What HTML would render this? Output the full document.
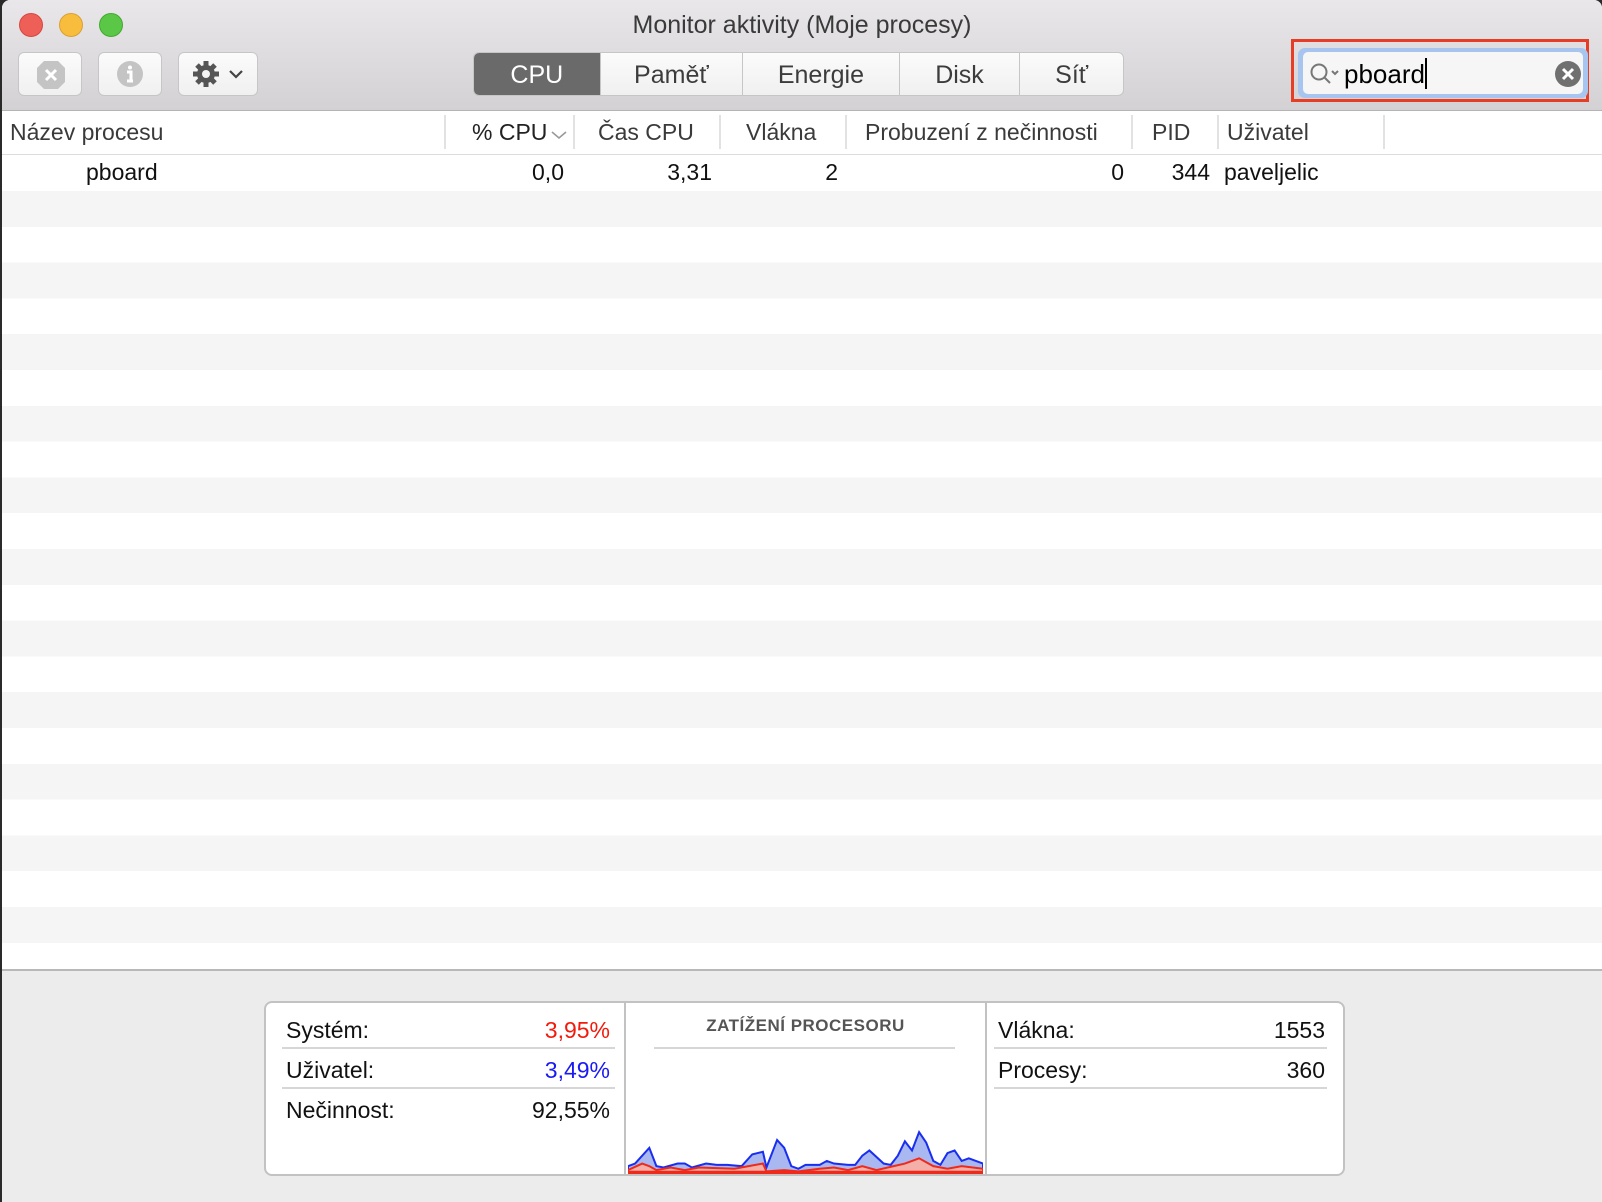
<!DOCTYPE html>
<html><head><meta charset="utf-8"><style>
*{margin:0;padding:0;box-sizing:border-box}
body{width:1602px;height:1202px;overflow:hidden;background:#2a2a2a;font-family:"Liberation Sans",sans-serif;position:relative}
.win{position:absolute;left:2px;top:0;width:1600px;height:1202px;background:#fff;border-radius:8px 8px 0 0;overflow:hidden}
.tb{position:absolute;left:0;top:0;width:100%;height:111px;background:linear-gradient(#e9e7ea,#d3d1d4);border-bottom:1px solid #b4b4b4}
.dot{position:absolute;top:13px;width:24px;height:24px;border-radius:50%}
.title{position:absolute;top:11px;left:0;width:100%;text-align:center;font-size:25px;color:#3a3a3a}
.btn{position:absolute;top:52px;height:44px;background:linear-gradient(#fbfbfb,#f0f0f0);border:1px solid #c6c6c6;border-radius:6px}
.seg{position:absolute;top:52px;left:471px;width:651px;height:44px;border:1px solid #c6c6c6;border-radius:6px;background:linear-gradient(#fbfbfb,#f0f0f0);display:flex;overflow:hidden}
.seg div{height:100%;display:flex;align-items:center;justify-content:center;font-size:25px;color:#3c3c3c;border-right:1px solid #c6c6c6;padding-top:2px}
.seg div.on{background:#6a6a6a;color:#fff}
.hdr{position:absolute;top:111px;left:0;width:100%;height:44px;border-bottom:1px solid #dcdcdc;background:#fff}
.hdr span{position:absolute;top:8px;font-size:23px;color:#3a3a3a}
.hdr i{position:absolute;top:4px;width:2px;height:34px;background:#e2e2e2}
.row{position:absolute;left:0;width:100%;height:36px;font-size:23px;color:#111}
.row span{position:absolute;top:4px}
.bot{position:absolute;left:0;top:969px;width:100%;height:233px;background:#ececec;border-top:2px solid #b8b8b8}
.box{position:absolute;left:262px;top:30px;width:1081px;height:175px;background:#fff;border:2px solid #c2c2c2;border-radius:8px}
.l{position:absolute;font-size:23px;color:#111}
.ln{position:absolute;height:2px;background:#d6d6d6}
</style></head><body>
<div class="win">
<div class="tb">
<div class="dot" style="left:17px;background:#ee5f58;border:1px solid #d8463f"></div>
<div class="dot" style="left:57px;background:#f8bd3c;border:1px solid #daa033"></div>
<div class="dot" style="left:97px;background:#5ac746;border:1px solid #44a830"></div>
<div class="title">Monitor aktivity (Moje procesy)</div>
<div class="btn" style="left:16px;width:64px"><svg width="64" height="44" viewBox="0 0 64 44"><polygon points="25,8 39,8 46,15 46,29 39,36 25,36 18,29 18,15" fill="#c4c4c4"/><path d="M27 17L37 27M37 17L27 27" stroke="#fff" stroke-width="3"/></svg></div>
<div class="btn" style="left:96px;width:64px"><svg width="64" height="44" viewBox="0 0 64 44"><circle cx="31" cy="21" r="13" fill="#c4c4c4"/><circle cx="31" cy="14.5" r="2" fill="#fff"/><path d="M28 19h4v9M28 28h6" stroke="#fff" stroke-width="3" fill="none"/></svg></div>
<div class="btn" style="left:176px;width:80px"><svg width="80" height="44" viewBox="0 0 80 44"><g transform="translate(27,21)" fill="#555"><circle r="9"/><g stroke="#555" stroke-width="5"><path d="M0-13V13M-13 0H13M-9-9L9 9M9-9L-9 9"/></g><circle r="4" fill="#f4f4f4"/></g><path d="M51 18l6 6 6-6" stroke="#444" stroke-width="2.2" fill="none"/></svg></div>
<div class="seg">
<div class="on" style="width:127px">CPU</div><div style="width:143px">Paměť</div><div style="width:157px">Energie</div><div style="width:121px">Disk</div><div style="width:103px;border:none">Síť</div>
</div>
<div style="position:absolute;left:1289px;top:39px;width:298px;height:63px;border:3px solid #e63e26"></div>
<div style="position:absolute;left:1296px;top:48px;width:290px;height:50px;background:#a7c5ee;border-radius:7px"></div>
<div style="position:absolute;left:1301px;top:52px;width:280px;height:42px;background:#f6f6f6;border-radius:5px"></div>
<svg style="position:absolute;left:1306px;top:60px" width="36" height="30" viewBox="0 0 36 30"><circle cx="11" cy="12" r="7.5" stroke="#777" stroke-width="2" fill="none"/><path d="M16.5 17.5L22 23M24 11l3 3 3-3" stroke="#777" stroke-width="2" fill="none"/></svg>
<div style="position:absolute;left:1342px;top:58px;font-size:26px;color:#000;white-space:nowrap">pboard<span style="display:inline-block;width:2px;height:31px;background:#000;vertical-align:-6px"></span></div>
<svg style="position:absolute;left:1552px;top:60px" width="28" height="28" viewBox="0 0 28 28"><circle cx="14" cy="14" r="13" fill="#707070"/><path d="M9 9L19 19M19 9L9 19" stroke="#fff" stroke-width="3"/></svg>
</div>
<div class="hdr">
<span style="left:8px">Název procesu</span>
<i style="left:442px"></i>
<span style="left:470px;color:#222">% CPU</span><svg style="position:absolute;left:549px;top:19px" width="16" height="10"><path d="M1 2l7 6 7-6" stroke="#999" stroke-width="1.6" fill="none"/></svg>
<i style="left:571px"></i>
<span style="left:596px">Čas CPU</span>
<i style="left:717px"></i>
<span style="left:744px">Vlákna</span>
<i style="left:843px"></i>
<span style="left:863px">Probuzení z nečinnosti</span>
<i style="left:1129px"></i>
<span style="left:1150px">PID</span>
<i style="left:1215px"></i>
<span style="left:1225px">Uživatel</span>
<i style="left:1381px"></i>
</div>
<div class="row" style="top:155px;background:#fff">
<span style="left:84px">pboard</span><span style="right:1038px">0,0</span><span style="right:890px">3,31</span><span style="right:764px">2</span><span style="right:478px">0</span><span style="right:392px">344</span><span style="left:1222px">paveljelic</span>
</div>
<div style="position:absolute;left:0;top:191px;width:100%;height:778px;background:repeating-linear-gradient(#f5f5f5 0 35.8px,#fff 35.8px 71.6px)"></div>
<div class="bot">
<div class="box">
<div class="l" style="left:20px;top:14px">Systém:</div><div class="l" style="right:733px;top:14px;color:#f21a0c">3,95%</div>
<div class="ln" style="left:16px;top:44px;width:333px"></div>
<div class="l" style="left:20px;top:54px">Uživatel:</div><div class="l" style="right:733px;top:54px;color:#1a1af2">3,49%</div>
<div class="ln" style="left:16px;top:84px;width:333px"></div>
<div class="l" style="left:20px;top:94px">Nečinnost:</div><div class="l" style="right:733px;top:94px">92,55%</div>
<div style="position:absolute;left:358px;top:0;width:2px;height:171px;background:#c2c2c2"></div>
<div style="position:absolute;left:719px;top:0;width:2px;height:171px;background:#c2c2c2"></div>
<div style="position:absolute;left:360px;top:13px;width:359px;text-align:center;font-size:17px;font-weight:bold;color:#555;letter-spacing:.5px">ZATÍŽENÍ PROCESORU</div>
<div class="ln" style="left:388px;top:44px;width:301px"></div>
<svg style="position:absolute;left:362px;top:103px" width="355" height="68" viewBox="0 0 100 52" preserveAspectRatio="none">
<path d="M0 52L0 46 2 44 6 32 8 46 10 47 14 44 16 44 18 47 22 44 25 45 28 45 32 46 35 37 38 35 39 47 42 26 44 32 46 46 48 48 50 45 54 45 56 42 58 44 62 45 64 45 66 38 68 34 72 44 74 45 76 38 78 27 80 34 82 20 84 28 86 42 88 45 90 36 92 34 94 42 96 40 98 42 100 44 100 52Z" fill="#a9b8f0" stroke="#1a2ef0" stroke-width="2" vector-effect="non-scaling-stroke"/>
<path d="M0 52L0 49 4 44 6 46 8 49 12 47 16 49 20 47 30 48 34 46 38 44 39 50 44 49 48 50 54 48 58 47 62 49 66 46 70 49 78 44 82 40 86 46 90 48 94 46 100 48 100 52Z" fill="#f4b0a8" stroke="#f02a1a" stroke-width="2" vector-effect="non-scaling-stroke"/>
<rect x="0" y="49.5" width="100" height="2.5" fill="#f02a1a"/>
</svg>
<div class="l" style="left:732px;top:14px">Vlákna:</div><div class="l" style="right:18px;top:14px">1553</div>
<div class="ln" style="left:728px;top:44px;width:333px"></div>
<div class="l" style="left:732px;top:54px">Procesy:</div><div class="l" style="right:18px;top:54px">360</div>
<div class="ln" style="left:728px;top:84px;width:333px"></div>
</div>
</div>
</div>
</body></html>
